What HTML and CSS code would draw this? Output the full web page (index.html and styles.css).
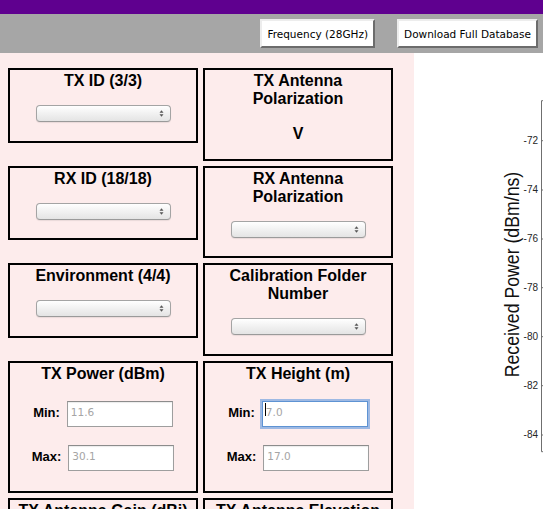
FILE: index.html
```html
<!DOCTYPE html>
<html lang="en">
<head>
<meta charset="utf-8">
<title>Channel Measurement Database</title>
<link rel="stylesheet" href="styles.css">
</head>
<body>
<header class="topbar"></header>
<nav class="toolbar">
  <button class="tool-btn" type="button">Frequency (28GHz)</button>
  <button class="tool-btn" type="button">Download Full Database</button>
</nav>
<main class="workspace">
  <section class="filters">
    <div class="card">
      <h3 class="card-title">TX ID (3/3)</h3>
      <div class="select-wrap">
        <select class="select" aria-label="TX ID"><option></option></select>
        <svg class="select-arrows" viewBox="0 0 6 9"><polygon points="0.6,3.6 3,0.6 5.4,3.6"/><polygon points="0.6,5.4 3,8.4 5.4,5.4"/></svg>
      </div>
    </div>
    <div class="card card--value">
      <h3 class="card-title">TX Antenna Polarization</h3>
      <div class="value">V</div>
    </div>
    <div class="card">
      <h3 class="card-title">RX ID (18/18)</h3>
      <div class="select-wrap">
        <select class="select" aria-label="RX ID"><option></option></select>
        <svg class="select-arrows" viewBox="0 0 6 9"><polygon points="0.6,3.6 3,0.6 5.4,3.6"/><polygon points="0.6,5.4 3,8.4 5.4,5.4"/></svg>
      </div>
    </div>
    <div class="card">
      <h3 class="card-title">RX Antenna Polarization</h3>
      <div class="select-wrap">
        <select class="select" aria-label="RX Antenna Polarization"><option></option></select>
        <svg class="select-arrows" viewBox="0 0 6 9"><polygon points="0.6,3.6 3,0.6 5.4,3.6"/><polygon points="0.6,5.4 3,8.4 5.4,5.4"/></svg>
      </div>
    </div>
    <div class="card">
      <h3 class="card-title">Environment (4/4)</h3>
      <div class="select-wrap">
        <select class="select" aria-label="Environment"><option></option></select>
        <svg class="select-arrows" viewBox="0 0 6 9"><polygon points="0.6,3.6 3,0.6 5.4,3.6"/><polygon points="0.6,5.4 3,8.4 5.4,5.4"/></svg>
      </div>
    </div>
    <div class="card">
      <h3 class="card-title">Calibration Folder Number</h3>
      <div class="select-wrap">
        <select class="select" aria-label="Calibration Folder Number"><option></option></select>
        <svg class="select-arrows" viewBox="0 0 6 9"><polygon points="0.6,3.6 3,0.6 5.4,3.6"/><polygon points="0.6,5.4 3,8.4 5.4,5.4"/></svg>
      </div>
    </div>
    <div class="card card--range">
      <h3 class="card-title">TX Power (dBm)</h3>
      <div class="range">
        <label class="range-label">Min:</label>
        <span class="field"><input class="field-input" type="text" placeholder="11.6"></span>
      </div>
      <div class="range">
        <label class="range-label">Max:</label>
        <span class="field"><input class="field-input" type="text" placeholder="30.1"></span>
      </div>
    </div>
    <div class="card card--range">
      <h3 class="card-title">TX Height (m)</h3>
      <div class="range">
        <label class="range-label">Min:</label>
        <span class="field field--focused"><input class="field-input is-focused" type="text" placeholder="7.0"></span>
      </div>
      <div class="range">
        <label class="range-label">Max:</label>
        <span class="field"><input class="field-input" type="text" placeholder="17.0"></span>
      </div>
    </div>
    <div class="card card--range">
      <h3 class="card-title">TX Antenna Gain (dBi)</h3>
      <div class="range">
        <label class="range-label">Min:</label>
        <span class="field"><input class="field-input" type="text"></span>
      </div>
      <div class="range">
        <label class="range-label">Max:</label>
        <span class="field"><input class="field-input" type="text"></span>
      </div>
    </div>
    <div class="card card--range">
      <h3 class="card-title">TX Antenna Elevation</h3>
      <div class="range">
        <label class="range-label">Min:</label>
        <span class="field"><input class="field-input" type="text"></span>
      </div>
      <div class="range">
        <label class="range-label">Max:</label>
        <span class="field"><input class="field-input" type="text"></span>
      </div>
    </div>
  </section>
  <section class="chart-area">
    <svg class="chart" width="400" height="456" viewBox="0 0 400 456">
      <g class="axis-lines">
        <line x1="127.5" y1="47.7" x2="127.5" y2="398.7"/>
        <line x1="127.5" y1="47.7" x2="400" y2="47.7"/>
        <line x1="127.5" y1="398.7" x2="400" y2="398.7"/>
        <line x1="127.5" y1="87.7" x2="131" y2="87.7"/>
        <line x1="127.5" y1="137" x2="131" y2="137"/>
        <line x1="127.5" y1="186" x2="131" y2="186"/>
        <line x1="127.5" y1="234.7" x2="131" y2="234.7"/>
        <line x1="127.5" y1="283.7" x2="131" y2="283.7"/>
        <line x1="127.5" y1="332.7" x2="131" y2="332.7"/>
        <line x1="127.5" y1="382" x2="131" y2="382"/>
      </g>
      <g class="tick-labels">
        <text x="124" y="91">-72</text>
        <text x="124" y="140.3">-74</text>
        <text x="124" y="189.3">-76</text>
        <text x="124" y="238">-78</text>
        <text x="124" y="287">-80</text>
        <text x="124" y="336">-82</text>
        <text x="124" y="385.3">-84</text>
      </g>
      <text class="axis-title" transform="translate(105 221.5) scale(1.12 1) rotate(-90)">Received Power (dBm/ns)</text>
    </svg>
  </section>
</main>
</body>
</html>
```

FILE: styles.css
```css
* {
  box-sizing: border-box;
}

html,
body {
  margin: 0;
  height: 100%;
  overflow: hidden;
}

body {
  font-family: "Liberation Sans", Arial, sans-serif;
  background: #ffffff;
  color: #000000;
}

.topbar {
  height: 14px;
  background: #5f008f;
}

.toolbar {
  height: 39px;
  background: #a6a6a6;
  display: flex;
  justify-content: flex-end;
  align-items: center;
  gap: 22px;
  padding-right: 5px;
}

.tool-btn {
  height: 29px;
  margin: 0;
  padding: 0 5px;
  font-family: "DejaVu Sans", Verdana, sans-serif;
  font-size: 10.5px;
  color: #000000;
  background: #ffffff;
  border: 2px solid;
  border-color: #ededed #6c6c6c #6c6c6c #ededed;
  border-radius: 0;
}

.workspace {
  display: flex;
  height: calc(100% - 53px);
}

.filters {
  flex: 0 0 414px;
  background: #fdecec;
  padding: 15px 0 0 8px;
  display: grid;
  grid-template-columns: 190px 190px;
  column-gap: 5px;
  row-gap: 5px;
  align-items: start;
  align-content: start;
}

.card {
  border: 2px solid #000000;
  padding: 2px 6px 18.5px;
  text-align: center;
}

.card--value {
  padding-bottom: 16.5px;
}

.card--range {
  padding-bottom: 20px;
}

.card-title {
  margin: 0;
  font-size: 16px;
  line-height: 18px;
  font-weight: bold;
}

.value {
  margin-top: 17px;
  font-size: 16px;
  line-height: 17px;
  font-weight: bold;
}

.select-wrap {
  position: relative;
  width: 135px;
  height: 17px;
  margin: 15px auto 0;
}

.select {
  -webkit-appearance: none;
  appearance: none;
  display: block;
  width: 100%;
  height: 100%;
  margin: 0;
  padding: 0;
  border: 1px solid #a4a4a4;
  border-bottom-color: #9a9a9a;
  border-radius: 4px;
  background: linear-gradient(#ffffff, #f1f1f1 50%, #e4e4e4);
  box-shadow: 0 1px 1px rgba(0, 0, 0, 0.08);
}

.select-arrows {
  position: absolute;
  right: 7px;
  top: 4px;
  width: 5px;
  height: 9px;
  fill: #555555;
  pointer-events: none;
}

.range {
  display: flex;
  justify-content: center;
  align-items: flex-start;
  margin-top: 18px;
}

.range-label {
  font-size: 13px;
  line-height: 15px;
  font-weight: bold;
  margin: 4px 7px 0 0;
}

.field {
  position: relative;
  display: block;
}

.field-input {
  display: block;
  width: 106px;
  height: 26px;
  margin: 0;
  padding: 4px 3px 8px 3px;
  font-family: "DejaVu Sans", Verdana, sans-serif;
  font-size: 10.5px;
  line-height: 12px;
  background: #ffffff;
  border: 1px solid #9e9e9e;
  border-top-color: #8c8c8c;
  border-radius: 0;
  box-shadow: inset 0 1px 1px rgba(0, 0, 0, 0.08);
  outline: none;
}

.field-input::placeholder {
  color: #a5a5a5;
}

.field-input.is-focused {
  border-color: #5e93d3;
  box-shadow: 0 0 0 2px rgba(125, 168, 224, 0.75);
}

.field--focused::after {
  content: "";
  position: absolute;
  left: 3px;
  top: 2px;
  width: 1px;
  height: 13px;
  background: #000000;
}

.chart-area {
  flex: 1;
  overflow: hidden;
  background: #ffffff;
}

.chart {
  display: block;
}

.axis-lines line {
  stroke: #6f6f6f;
  stroke-width: 1;
}

.tick-labels text {
  font-family: "Liberation Sans", Arial, sans-serif;
  font-size: 10px;
  fill: #262626;
  text-anchor: end;
}

.axis-title {
  font-family: "Liberation Sans", Arial, sans-serif;
  font-size: 17.7px;
  fill: #111111;
  text-anchor: middle;
}
```
